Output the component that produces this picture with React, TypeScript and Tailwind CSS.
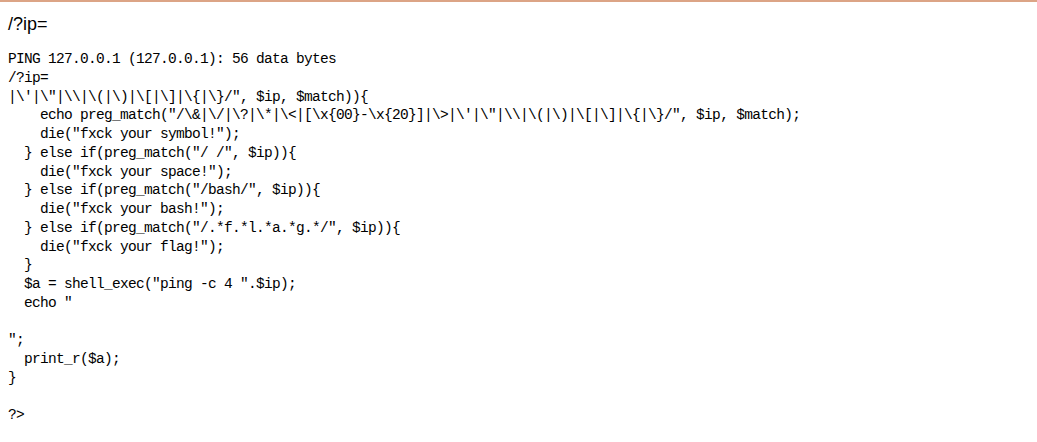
const OUTPUT = String.raw`PING 127.0.0.1 (127.0.0.1): 56 data bytes
/?ip=
|\'|\"|\\|\(|\)|\[|\]|\{|\}/", $ip, $match)){
    echo preg_match("/\&|\/|\?|\*|\<|[\x{00}-\x{20}]|\>|\'|\"|\\|\(|\)|\[|\]|\{|\}/", $ip, $match);
    die("fxck your symbol!");
  } else if(preg_match("/ /", $ip)){
    die("fxck your space!");
  } else if(preg_match("/bash/", $ip)){
    die("fxck your bash!");
  } else if(preg_match("/.*f.*l.*a.*g.*/", $ip)){
    die("fxck your flag!");
  }
  $a = shell_exec("ping -c 4 ".$ip);
  echo "

";
  print_r($a);
}

?>`

export default function App() {
  return (
    <div className="min-h-[442px] w-full bg-white text-black">
      {/* window edge */}
      <div className="h-[2px] w-full bg-[#dca486]" />

      <div className="px-2">
        <p className="pt-[12px] text-[18px] leading-[21px] font-['Liberation_Sans',Arial,sans-serif]">
          /?ip=
        </p>

        {/* ping output */}
        <pre className="mt-[15px] whitespace-pre text-[14.5px] leading-[18.75px] tracking-[-0.7px] font-['Liberation_Mono','Courier_New',monospace]">
          {OUTPUT}
        </pre>
      </div>
    </div>
  )
}
